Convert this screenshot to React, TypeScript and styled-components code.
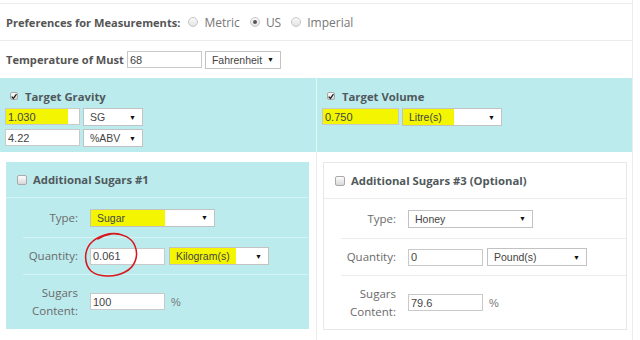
import React from "react";
import styled, { createGlobalStyle } from "styled-components";

const GlobalStyle = createGlobalStyle`
  html, body {
    margin: 0;
    padding: 0;
    background: #fff;
  }
  body {
    font-family: "Open Sans", "Liberation Sans", sans-serif;
  }
`;

const TEAL = "#bcebee";
const MARK = "#f3f600";

const Page = styled.div`
  width: 633px;
  height: 340px;
  padding-top: 3px;
  box-sizing: border-box;
  border-right: 1px solid #ededed;
`;

const Row = styled.div<{ $h: number }>`
  height: ${(p) => p.$h}px;
  border-top: 1px solid #ececec;
  display: flex;
  align-items: center;
  gap: 3px;
  padding-left: 6px;
  font-size: 11.1px;
  color: #666;
`;

const Bold = styled.span<{ $gap?: number }>`
  font-weight: 700;
  color: #555;
  margin-right: ${(p) => p.$gap ?? 0}px;
`;

const RadioItem = styled.label`
  display: flex;
  align-items: center;
  gap: 6px;
  margin-right: 7px;
  font-size: 12px;
  color: #777;
`;

const Radio = styled.span<{ $on?: boolean }>`
  width: 10px;
  height: 10px;
  box-sizing: border-box;
  border-radius: 50%;
  border: 1px solid #c6c6c6;
  background: linear-gradient(#fafafa, #e2e2e2);
  display: flex;
  align-items: center;
  justify-content: center;
  &::after {
    content: "";
    width: 4px;
    height: 4px;
    border-radius: 50%;
    background: ${(p) => (p.$on ? "#555" : "transparent")};
  }
`;

const Input = styled.div<{ $w: number; $mark?: number }>`
  width: ${(p) => p.$w}px;
  height: 17px;
  box-sizing: border-box;
  border: 1px solid #c9c9c9;
  background: ${(p) =>
    p.$mark
      ? `linear-gradient(to right, ${MARK} ${p.$mark}px, #fff ${p.$mark}px)`
      : "#fff"};
  padding-left: 2px;
  display: flex;
  align-items: center;
  font: 11px "Liberation Sans", Arial, sans-serif;
  color: #444;
`;

const Select = styled.div<{ $w: number; $mark?: number }>`
  width: ${(p) => p.$w}px;
  height: 18px;
  box-sizing: border-box;
  border: 1px solid #c2c2c2;
  background: ${(p) =>
    p.$mark
      ? `linear-gradient(to right, ${MARK} ${p.$mark}px, #fff ${p.$mark}px)`
      : "#fff"};
  padding: 0 6px 0 6px;
  display: flex;
  align-items: center;
  justify-content: space-between;
  font: 10.5px "Liberation Sans", Arial, sans-serif;
  color: #444;
  &::after {
    content: "▼";
    font-size: 7px;
    color: #111;
  }
`;

const Band = styled.div`
  display: grid;
  grid-template-columns: 316px 1fr;
  height: 74px;
  background: ${TEAL};
`;

const BandCell = styled.div<{ $divider?: boolean }>`
  padding: 10px 0 0 5px;
  border-left: ${(p) => (p.$divider ? "1px solid #e4f7f8" : "none")};
  display: flex;
  flex-direction: column;
  gap: 3px;
`;

const CellHead = styled.div`
  display: flex;
  align-items: center;
  gap: 7px;
  height: 16px;
  margin-bottom: 1px;
  padding-left: 5px;
  font-size: 11.3px;
  font-weight: 700;
  color: #50595b;
`;

const Pair = styled.div`
  display: flex;
  gap: 3px;
`;

const Box = styled.span<{ $size: number }>`
  width: ${(p) => p.$size}px;
  height: ${(p) => p.$size}px;
  box-sizing: border-box;
  border: 1px solid #a9a9a9;
  border-radius: 2px;
  background: linear-gradient(#fdfdfd, #d8d8d8);
  display: flex;
  align-items: center;
  justify-content: center;
  flex-shrink: 0;
`;

const Lower = styled.div`
  display: grid;
  grid-template-columns: 316px 1fr;
  height: 188px;
`;

const Column = styled.div<{ $divider?: boolean }>`
  padding: 10px 6px 0 6px;
  border-left: ${(p) => (p.$divider ? "1px solid #ececec" : "none")};
  display: flex;
  align-items: flex-start;
`;

const Panel = styled.div<{ $teal?: boolean }>`
  width: ${(p) => (p.$teal ? 303 : 304)}px;
  height: ${(p) => (p.$teal ? 167 : 168)}px;
  box-sizing: border-box;
  background: ${(p) => (p.$teal ? TEAL : "#fff")};
  border: ${(p) => (p.$teal ? "none" : "1px solid #e8e8e8")};
  display: flex;
  flex-direction: column;
  --line: ${(p) => (p.$teal ? "#d3f3f4" : "#ececec")};
`;

const PanelHead = styled.div`
  height: 36px;
  box-sizing: border-box;
  border-bottom: 1px solid var(--line);
  display: flex;
  align-items: center;
  gap: 6px;
  padding-left: 11px;
  font-size: 11.3px;
  font-weight: 700;
  color: #50595b;
`;

const FieldRow = styled.div<{ $h: number; $first?: boolean }>`
  height: ${(p) => p.$h}px;
  margin-left: 17px;
  box-sizing: border-box;
  border-top: ${(p) => (p.$first ? "none" : "1px solid var(--line)")};
  display: grid;
  grid-template-columns: 55px auto;
  column-gap: 12px;
  align-items: center;
  justify-content: start;
`;

const Label = styled.div`
  text-align: right;
  font-size: 11.5px;
  line-height: 18px;
  color: #6a6a6a;
`;

const Controls = styled.div`
  display: flex;
  align-items: center;
  gap: 4px;
  position: relative;
`;

const Unit = styled.span`
  font: 11px "Liberation Sans", Arial, sans-serif;
  color: #777;
  margin-left: 2px;
`;

const Scribble = styled.svg`
  position: absolute;
  left: -7px;
  top: -15px;
  width: 57px;
  height: 46px;
  overflow: visible;
  pointer-events: none;
`;

const Tick = () => (
  <svg width="7" height="7" viewBox="0 0 7 7">
    <path d="M0.8 3.6 L2.8 5.8 L6.4 0.8" fill="none" stroke="#222" strokeWidth="1.5" />
  </svg>
);

const Check = ({ size, on }: { size: number; on?: boolean }) => (
  <Box $size={size}>{on && <Tick />}</Box>
);

interface SugarProps {
  title: string;
  teal?: boolean;
  type: string;
  typeMark?: number;
  qty: string;
  unit: string;
  unitMark?: number;
  content: string;
  circled?: boolean;
}

const SugarPanel: React.FC<SugarProps> = ({
  title,
  teal,
  type,
  typeMark,
  qty,
  unit,
  unitMark,
  content,
  circled,
}) => {
  return (
    <Panel $teal={teal}>
      <PanelHead>
        <Check size={10} />
        {title}
      </PanelHead>
      <FieldRow $h={39} $first>
        <Label>Type:</Label>
        <Controls>
          <Select $w={125} $mark={typeMark}>
            {type}
          </Select>
        </Controls>
      </FieldRow>
      <FieldRow $h={37}>
        <Label>Quantity:</Label>
        <Controls>
          <Input $w={75}>{qty}</Input>
          <Select $w={100} $mark={unitMark}>
            {unit}
          </Select>
          {circled && (
            <Scribble viewBox="0 0 57 46">
              <path
                d="M39 3 C28 -1 14 4 7 12 C1 20 1 32 8 39 C15 45 31 46 42 40 C52 35 56 24 52 14 C49 6 40 1 28 2 C22 3 18 5 15 7"
                fill="none"
                stroke="#d8161b"
                strokeWidth="1.5"
                strokeLinecap="round"
              />
            </Scribble>
          )}
        </Controls>
      </FieldRow>
      <FieldRow $h={54}>
        <Label>
          Sugars
          <br />
          Content:
        </Label>
        <Controls>
          <Input $w={75}>{content}</Input>
          <Unit>%</Unit>
        </Controls>
      </FieldRow>
    </Panel>
  );
};

const App: React.FC = () => {
  return (
    <>
      <GlobalStyle />
      <Page>
        <Row $h={36}>
          <Bold $gap={5}>Preferences for Measurements:</Bold>
          <RadioItem>
            <Radio />
            Metric
          </RadioItem>
          <RadioItem>
            <Radio $on />
            US
          </RadioItem>
          <RadioItem>
            <Radio />
            Imperial
          </RadioItem>
        </Row>
        <Row $h={37}>
          <Bold>Temperature of Must</Bold>
          <Input $w={75}>68</Input>
          <Select $w={76}>Fahrenheit</Select>
        </Row>
        <Band>
          <BandCell>
            <CellHead>
              <Check size={8} on />
              Target Gravity
            </CellHead>
            <Pair>
              <Input $w={75} $mark={62}>
                1.030
              </Input>
              <Select $w={60}>SG</Select>
            </Pair>
            <Pair>
              <Input $w={75}>4.22</Input>
              <Select $w={60}>%ABV</Select>
            </Pair>
          </BandCell>
          <BandCell $divider>
            <CellHead>
              <Check size={8} on />
              Target Volume
            </CellHead>
            <Pair>
              <Input $w={77} $mark={77}>
                0.750
              </Input>
              <Select $w={100} $mark={51}>
                Litre(s)
              </Select>
            </Pair>
          </BandCell>
        </Band>
        <Lower>
          <Column>
            <SugarPanel
              teal
              title="Additional Sugars #1"
              type="Sugar"
              typeMark={74}
              qty="0.061"
              unit="Kilogram(s)"
              unitMark={66}
              content="100"
              circled
            />
          </Column>
          <Column $divider>
            <SugarPanel
              title="Additional Sugars #3 (Optional)"
              type="Honey"
              qty="0"
              unit="Pound(s)"
              content="79.6"
            />
          </Column>
        </Lower>
      </Page>
    </>
  );
};

export default App;
